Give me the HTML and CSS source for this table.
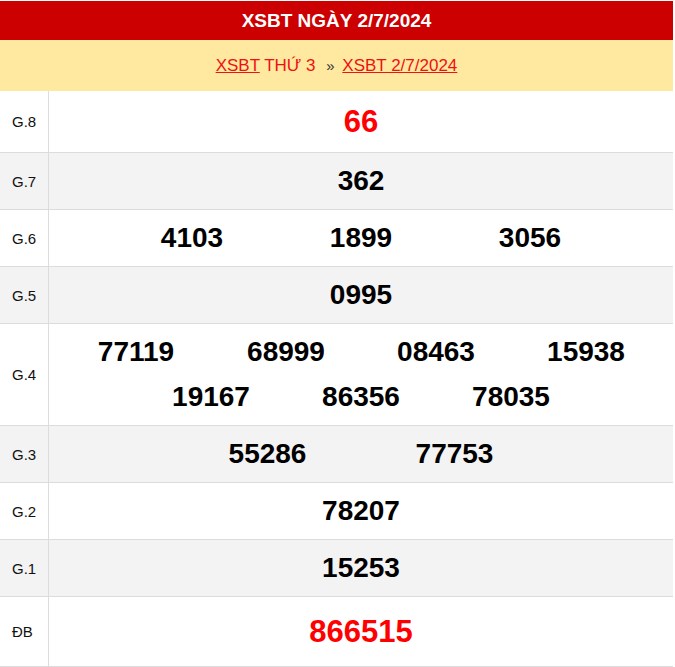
FILE: index.html
```html
<!DOCTYPE html>
<html lang="vi">
<head>
<meta charset="utf-8">
<title>XSBT 2/7/2024</title>
<link rel="stylesheet" href="styles.css">
</head>
<body>
<div class="board">
  <div class="title">XSBT NGÀY 2/7/2024</div>
  <div class="crumbs"><span class="crumbs-inner"><a href="#">XSBT</a> THỨ 3 <span class="sep">»</span> <a href="#">XSBT 2/7/2024</a></span></div>

  <div class="row row-g8"><div class="label">G.8</div><div class="nums"><span class="n big red">66</span></div></div>
  <div class="row alt"><div class="label">G.7</div><div class="nums"><span class="n">362</span></div></div>
  <div class="row"><div class="label">G.6</div><div class="nums"><span class="n w6">4103</span><span class="n w6">1899</span><span class="n w6">3056</span></div></div>
  <div class="row alt"><div class="label">G.5</div><div class="nums"><span class="n">0995</span></div></div>
  <div class="row"><div class="label">G.4</div><div class="nums"><span class="n w4">77119</span><span class="n w4">68999</span><span class="n w4">08463</span><span class="n w4">15938</span><span class="n w4">19167</span><span class="n w4">86356</span><span class="n w4">78035</span></div></div>
  <div class="row alt"><div class="label">G.3</div><div class="nums"><span class="n w3">55286</span><span class="n w3">77753</span></div></div>
  <div class="row"><div class="label">G.2</div><div class="nums"><span class="n">78207</span></div></div>
  <div class="row alt"><div class="label">G.1</div><div class="nums"><span class="n">15253</span></div></div>
  <div class="row row-db"><div class="label">ĐB</div><div class="nums"><span class="n big red">866515</span></div></div>
</div>
</body>
</html>
```

FILE: styles.css
```css
html, body {
  margin: 0;
  padding: 0;
  background: #fff;
}

body {
  font-family: "Liberation Sans", Arial, sans-serif;
}

.board {
  width: 673px;
  padding-top: 1px;
}

.title {
  height: 39px;
  background: #cc0000;
  color: #fff;
  font-weight: bold;
  font-size: 19px;
  display: flex;
  align-items: center;
  justify-content: center;
}

.crumbs {
  height: 51px;
  background: #ffe8a0;
  color: #ee1111;
  font-size: 17px;
  display: flex;
  align-items: center;
  justify-content: center;
}

.crumbs a {
  color: #ee1111;
  text-decoration: underline;
}

.sep {
  color: #333;
  font-size: 15px;
  margin: 0 3px 0 6px;
}

.row {
  display: flex;
  min-height: 56px;
  border-bottom: 1px solid #dcdcdc;
  background: #fff;
}

.row.alt {
  background: #f3f3f3;
}

.row-g8 {
  min-height: 61px;
}

.row-db {
  min-height: 69px;
}

.label {
  flex-shrink: 0;
  width: 36px;
  padding-left: 12px;
  border-right: 1px solid #dcdcdc;
  display: flex;
  align-items: center;
  font-size: 15px;
  color: #111;
}

.nums {
  flex: 1;
  display: flex;
  flex-wrap: wrap;
  justify-content: center;
  align-content: center;
  padding: 5px 0 6px;
}

.n {
  font-weight: bold;
  font-size: 28px;
  line-height: 45px;
  color: #000;
  text-align: center;
}

.n.big {
  font-size: 31px;
}

.n.red {
  color: #ff0000;
}

.w4 { width: 150px; }
.w6 { width: 169px; }
.w3 { width: 187px; }
```
